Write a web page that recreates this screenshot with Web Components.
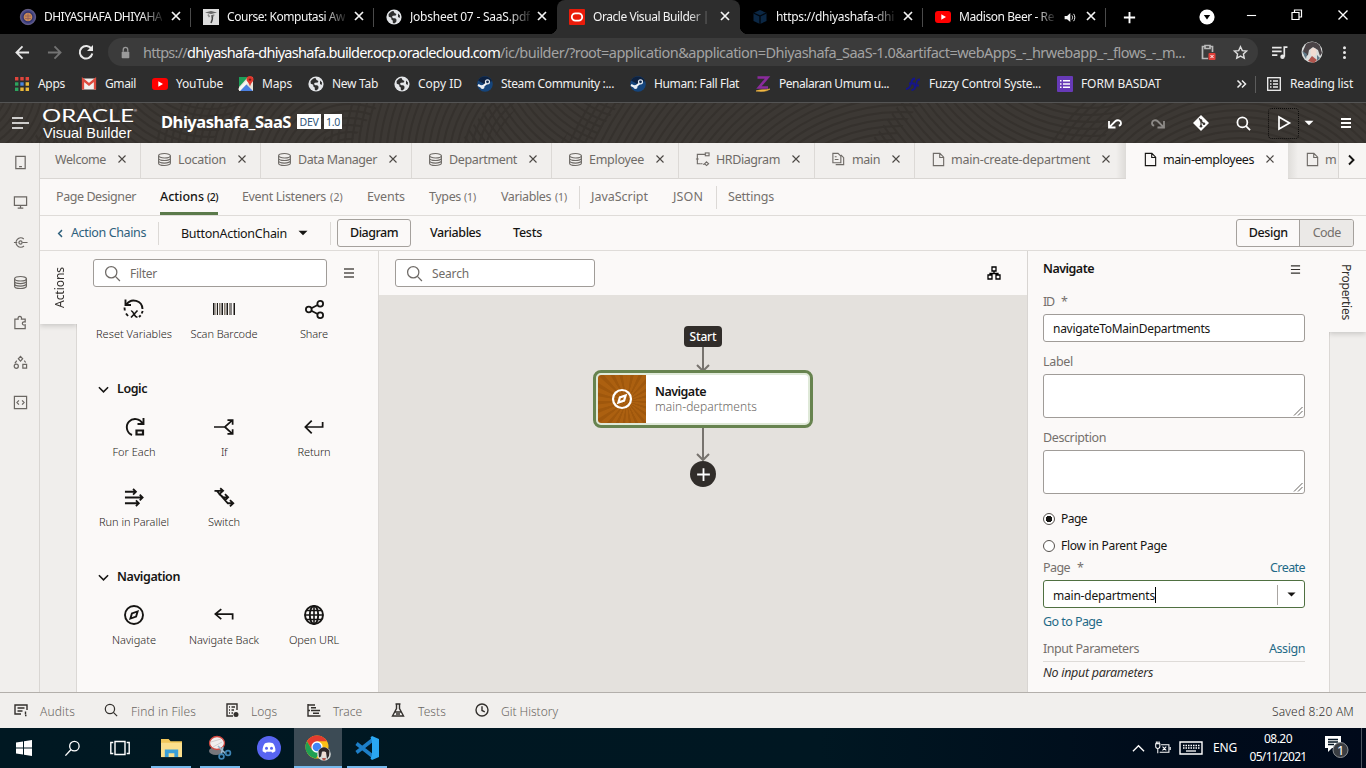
<!DOCTYPE html>
<html lang="en">
<head>
<meta charset="utf-8">
<title>Oracle Visual Builder</title>
<style>
html,body{margin:0;height:768px;overflow:hidden;background:#fbf9f8}
body{font-family:"Noto Sans","Open Sans",sans-serif;font-size:12px}
</style>
</head>
<body>
<desktop-screen></desktop-screen>
<script>
const define=(tag,css,html,ready)=>customElements.define(tag,class extends HTMLElement{
  connectedCallback(){
    if(this.shadowRoot)return;
    const root=this.attachShadow({mode:'open'});
    const t=document.createElement('template');
    t.innerHTML=`<style>:host{display:block;box-sizing:border-box}*{box-sizing:border-box}${css}</style>`+(typeof html==='function'?html(this):html);
    root.append(t.content.cloneNode(true));
    if(ready)ready(this,root);
  }
});

/* Single line of text whose letter spacing is tuned to fill the width in "w". */
define('ui-text',`:host{display:inline-block;white-space:pre;line-height:16px;flex:none;height:16px}
:host([fade]){-webkit-mask-image:linear-gradient(90deg,#000 82%,rgba(0,0,0,.15) 100%)}
span{display:inline-block;white-space:pre}`,'<span><slot></slot></span>',(el,root)=>{
  const w=+el.getAttribute('w');if(!w)return;
  const s=root.querySelector('span'),n=el.textContent.length;
  const size=el.getAttribute('size');if(size)el.style.fontSize=size+'px';
  el.style.width=w+'px';
  s.style.letterSpacing=((w-s.getBoundingClientRect().width)/n)+'px';
});
const T=(t,w,size,css='',attr='')=>`<ui-text w="${w}"${size?` size="${size}"`:''} style="${css}" ${attr}>${t}</ui-text>`;

const globe='<circle cx="8" cy="8" r="7.6" fill="#e3e5e8" stroke="none"/><path fill="#2d2d2d" stroke="none" d="M2.5 5.5c1-2 2.6-3.4 5-3.6L8.5 4 10.400 5l-.6 1.500-3 .3-.9 1.200 1.400 1.300h2l1.300 1.400-.4 2.200-2 1.500-1.300-.4-.2-2.500-1.500-1.300.2-1.400-2.600-1zM12 4.500l2 2-.3 2.500-1.700-1z"/>';
const db='<ellipse cx="8" cy="4" rx="6.300" ry="2.400"/><path d="M1.700 4v8c0 1.300 2.800 2.400 6.300 2.400s6.300-1.100 6.300-2.400V4M1.700 6.700C1.700 8 4.500 9.100 8 9.100s6.300-1.100 6.300-2.400M1.700 9.400c0 1.300 2.800 2.400 6.300 2.400s6.300-1.100 6.300-2.400"/>';
const steam='<circle cx="8" cy="8" r="7.800" fill="#15457c" stroke="none"/><path d="M1 4.500A8 8 0 0 1 15 5L9 9z" fill="#0d2140" stroke="none"/><path d="M1 9l4 2 5-4" stroke="#f2f4f6" stroke-width="2.200"/><circle cx="10.500" cy="5.800" r="2.600" fill="#dfe6ee" stroke="none"/><circle cx="10.500" cy="5.800" r="1.400" fill="#0f2a4f" stroke="none"/><circle cx="5.500" cy="11" r="2" fill="#e8edf3" stroke="none"/>';
const compass='<circle cx="10" cy="10" r="9"/><path d="M13.600 6.400l-1.500 5.200-5.700 2 1.500-5.200z"/>';
const ICONS={
crest:[16,'<circle cx="8" cy="8" r="7.700" fill="#4b4a86" stroke="#8b82a8" stroke-width=".6"/><circle cx="8" cy="8" r="5" fill="#c98a55" stroke="#2f336e"/><path d="M5 7h6M5 9.500h6M8 4.500v7" stroke="#8e5a5c" stroke-width=".8"/>'],
moodle:[16,'<rect width="16" height="16" fill="#dcdcdc" stroke="none"/><path d="M2 3.500l6-1.500 6 1.500-6 1.500z" fill="#666" stroke="none"/><path d="M9 6c1 3 0 6-1 8" stroke="#444" stroke-width="1.500"/><path d="M5 5.500l1.500 2.500M11 5.500l-1 2" stroke="#888" stroke-width="1.500"/>'],
globe:[16,globe],
oracle:[16,'<rect width="16" height="16" rx="1" fill="#ea1b0a" stroke="none"/><rect x="2.800" y="4.400" width="10.400" height="7.200" rx="3.600" stroke="#fff" stroke-width="1.800"/>'],
cube:[16,'<path d="M8 1l6.500 3v8L8 15l-6.500-3V4z" fill="#0b2744" stroke="none"/><path d="M1.500 4L8 7l6.500-3M8 7v8" stroke="#01060c" stroke-width="1.300"/>'],
yt:[16,'<rect y="2" width="16" height="12" rx="3" fill="#f00" stroke="none"/><path d="M6.300 5.200v5.600L11 8z" fill="#fff" stroke="none"/>'],
x:[16,'<path d="M4 4l8 8M12 4l-8 8"/>'],
audio:[16,'<path d="M2 6h3l4-3.500v11L5 10H2z" fill="currentColor" stroke="none"/><path d="M11 5.500c1 1 1 4 0 5M13 3.500c2 2 2 7 0 9"/>'],
plus:[16,'<path d="M8 2v12M2 8h12"/>'],
dropc:[16,'<circle cx="8" cy="8" r="7.600" fill="#fff" stroke="none"/><path d="M4.800 6h6.400L8 10.400z" fill="#000" stroke="none"/>'],
min:[12,'<path d="M1 6h10"/>'],
restore:[12,'<path d="M1 3.500h7v7H1zM3.500 3.500V1h7v7H8"/>'],
back:[16,'<path d="M15 8H2M8 1.500L1.500 8 8 14.500"/>'],
fwd:[16,'<path d="M1 8h13M8 1.500L14.500 8 8 14.500"/>'],
reload:[16,'<path d="M13.500 5A6.300 6.300 0 1 0 14.300 9.500"/><path d="M15 1v6H9z" fill="currentColor" stroke="none"/>'],
lock:[16,'<rect x="3.300" y="7" width="9.400" height="8" rx="1" fill="currentColor" stroke="none"/><path d="M5.200 7V4.600a2.800 2.800 0 0 1 5.600 0V7" stroke-width="1.600"/>'],
clip:[16,'<path d="M5 2.500H2.500v12H8M10 2.500h2.500V8M5 1.500h5v3H5z" stroke-width="1.700"/><rect x="8.500" y="9" width="7" height="7" rx="1" fill="#e0403a" stroke="none"/><path d="M10.500 11l3 3M13.500 11l-3 3" stroke="#fff" stroke-width="1"/>'],
star:[16,'<path d="M8 1.800l1.900 4.200 4.600.5-3.400 3.100.9 4.500L8 11.800 4 14.100l.9-4.500L1.500 6.500 6.100 6z"/>'],
music:[16,'<path d="M1 3.500h9M1 7h9M1 10.500h5M15.500 3h-3v9" stroke-width="1.600"/><circle cx="10.800" cy="12" r="2.100" fill="currentColor" stroke="none"/>'],
avatar:[22,'<circle cx="11" cy="11" r="10.500" fill="#d9dcdb" stroke="none"/><path d="M5 3c4-3 11-3 14 2l2 7-2 3-2-6-5-3-4 3-1 5-3 2-2-6z" fill="#4a4346" stroke="none"/><ellipse cx="12.500" cy="11" rx="3" ry="4" fill="#f0dcd3" stroke="none"/><path d="M7 20l4-5 5 4-3 3z" fill="#b0554d" stroke="none"/><path d="M1 10l5 3-1 5zM16 14l3 3-3 3z" fill="#5f7a89" stroke="none"/>'],
dots:[16,'<g fill="currentColor" stroke="none"><circle cx="8" cy="2.800" r="1.600"/><circle cx="8" cy="8" r="1.600"/><circle cx="8" cy="13.200" r="1.600"/></g>'],
apps:[14,'<g stroke="none"><path fill="#e0453c" d="M0 0h3.400v3.400H0zM5.300 0h3.400v3.400H5.300zM10.600 0H14v3.400h-3.400z"/><path fill="#2da45e" d="M0 5.300h3.400v3.400H0z"/><path fill="#4a86e0" d="M5.300 5.300h3.400v3.400H5.300z"/><path fill="#eab83a" d="M10.600 5.300H14v3.400h-3.400zM5.300 10.600h3.400V14H5.300zM10.600 10.600H14V14h-3.400z"/><path fill="#2da45e" d="M0 10.600h3.400V14H0z"/></g>'],
gmail:[16,'<path d="M1 2.500h14v11H1z" fill="#f2f0ee" stroke="none"/><path d="M2 13.500v-10l6 5 6-5v10" stroke="#dd4b3e" stroke-width="2.300"/>'],
maps:[16,'<path d="M1 1h14v14H1z" fill="#e9e4d8" stroke="none"/><path d="M1 1h9L1 11z" fill="#1e9d58" stroke="none"/><path d="M8 8l7 7H2z" fill="#4a7fe0" stroke="none"/><path d="M1 14L13 2" stroke="#f8f6f0" stroke-width="2.500"/><path d="M12 0a3.500 3.500 0 0 1 3.500 3.500c0 2-2.500 3-3.500 7-1-4-3.500-5-3.500-7A3.500 3.500 0 0 1 12 0z" fill="#e0382d" stroke="none"/><circle cx="12" cy="3.600" r="1.200" fill="#7d1a15" stroke="none"/>'],
steam:[16,steam],
zen:[16,'<path d="M2.500 1.500h10L4 11.500h9" stroke="#8a2b9c" stroke-width="2.600"/><path d="M1 15c5-2 9-.5 14-2-4 3-9 2.500-14 2z" fill="#f4b942" stroke="#f4b942" stroke-width=".6"/>'],
fuzzy:[16,'<path d="M10 2.500C6.500 2.500 7 5 6 8s-2 5-5 5M4 7.500h6M15 3.500c-4 0-3 2.500-4 5.500s-1.500 5-4.500 5M8.500 9.500H14" stroke="#15158a" stroke-width="1.800"/>'],
form:[16,'<rect width="16" height="16" rx="1" fill="#673ab7" stroke="none"/><path d="M6 4.800h7M6 8h7M6 11.200h7M3 4.800h1.500M3 8h1.500M3 11.200h1.500" stroke="#fff" stroke-width="1.500"/>'],
read:[14,'<rect x=".7" y=".7" width="12.600" height="12.600"/><path d="M6 4h5M6 7h5M6 10h5M3 4h1.500M3 7h1.500M3 10h1.500"/>'],
raquo:[12,'<path d="M1.500 2.500L5 6 1.500 9.500M6 2.500L9.500 6 6 9.500"/>'],
burger:[18,'<path d="M1 4h11M1 9h17M1 14h11"/>'],
menu:[12,'<path d="M1 2h10M1 6h10M1 10h10"/>'],
undo:[16,'<path d="M2 6v6.500h6.500M2.200 12.300L8 6.500c2.500-2.300 6-1 6 1.500 0 1.600-1 2.500-2.200 2.700"/>'],
redo:[16,'<path d="M14 6v6.500H7.500M13.800 12.300L8 6.500C5.500 4.200 2 5.500 2 8c0 1.600 1 2.500 2.200 2.700"/>'],
git:[16,'<path d="M8 0l8 8-8 8-8-8z" fill="#fff" stroke="none"/><path d="M6 3.500l2 1.800v6M8 6l3 3" stroke="#3a3632" stroke-width="1.200"/><g fill="#3a3632" stroke="none"><circle cx="8" cy="5.500" r="1.300"/><circle cx="8" cy="11.300" r="1.300"/><circle cx="11" cy="8.700" r="1.300"/></g>'],
mag:[16,'<circle cx="6.800" cy="6.800" r="5.300"/><path d="M10.700 10.700L15 15"/>'],
play:[16,'<path d="M3 2v12l10.500-6z"/>'],
caret:[10,'<path d="M.5 2.800h9L5 7.300z" fill="currentColor" stroke="none"/>'],
phone:[16,'<path d="M3 1.500h10v13H3zM6.500 12.300h3"/>'],
desk:[16,'<path d="M1.500 2h13v9h-13zM8 11v3M5 14h6"/>'],
svc:[16,'<path d="M11.500 4.200a5 5 0 1 0 .2 7.500M1 8h3.500M10 8h5.500"/><circle cx="8" cy="8" r="1.700"/>'],
db:[16,db],
puzzle:[16,'<path d="M2 4.500h3.500C5 2.500 6 1.500 7.300 1.500S9.500 2.500 9 4.500h4v3c-2-.5-3 .3-3 1.500s1 2 3 1.500v4H2z"/>'],
shapes:[16,'<path d="M8 1.500L10.300 4 8 6.500 5.700 4zM10.500 10h4v4h-4zM4 6L2 9M12 6l1.500 2"/><circle cx="3.500" cy="12" r="2.200"/>'],
code:[16,'<path d="M1.500 1.500h13v13h-13zM6.300 5.800L4.200 8l2.100 2.200M9.700 5.800L11.800 8l-2.100 2.200"/>'],
erd:[16,'<path d="M5 2.500H2.500v10H6M1 7.500h3M5 2.500h6M8.500 13h2"/><rect x="11" y="1" width="4" height="3"/><path d="M12.300 10.500l2.200 2-2.200 2-2-2zM8 12.500H6"/>'],
pages:[16,'<path d="M2 1.500h5.500L10.500 4.500v7H2zM5 13.500h8.500V6l-3-3M4 5h2M4 8h4"/>'],
page:[16,'<path d="M2.500 1.500h7l4 4v9h-11zM9.300 1.800v4h4"/>'],
right:[12,'<path d="M4 1.500L8.500 6 4 10.500"/>'],
left:[12,'<path d="M8 1.500L3.500 6 8 10.500"/>'],
down:[12,'<path d="M1 3.500L6 8.500l5-5"/>'],
org:[14,'<path d="M5 1h4v4H5zM1 9h4v4H1zM9 9h4v4H9zM7 5v2.500M3 9V7.500h8V9"/>'],
reset:[22,'<path d="M3.500 6.500A8.700 8.700 0 0 1 19.500 11M2.500 1.500v5.500H8"/><path d="M1.500 9.500l.3 3M3 15.500l2 2.500M19.700 13l-1 2.500M17.700 17.300L16 19" stroke-width="1.900"/><path d="M8 13c2.500-1 3 6.500 6.500 6M14.500 12.500L8 19.500" stroke-width="1.600"/>'],
barcode:[22,'<g stroke="none"><path fill="#1b1916" d="M0 5h1.500v12H0zM4 5h1v12H4zM8.500 5H10v12H8.500zM13.500 5H15v12h-1.500zM17.500 5h1v12h-1zM20.500 5H22v12h-1.500z"/><path fill="#8a8175" d="M2.300 5h1v12h-1zM6 5h1.600v12H6zM11 5h1.600v12H11zM16 5h.9v12H16z"/></g>'],
share:[22,'<circle cx="5" cy="11" r="3"/><circle cx="17" cy="5" r="3"/><circle cx="17" cy="17" r="3"/><path d="M7.700 9.700l6.600-3.400M7.700 12.300l6.600 3.400"/>'],
each:[22,'<path d="M9 19A8.300 8.300 0 1 1 19.500 7.500M20.500 2v6h-6"/><path d="M13.500 14.500h6.500v4h-6.500z" stroke-width="2.200"/>'],
iff:[22,'<path d="M0 11h12l8-7.300M12 11l8 7.300M14.800 3.500h5.700v5M14.800 18.500h5.700v-5"/>'],
ret:[22,'<path d="M2 11h18.500V5.500M8.500 4L1.500 11l7 7"/>'],
para:[22,'<path d="M1 5h11M1 11h18M1 17h14M9.500 2l3 3-3 3M16.500 8l3 3-3 3M12.500 14l3 3-3 3"/>'],
sw:[22,'<path d="M0.500 4h8.500M3 4l11.500 13h5.500M5 7l5 4h5M6.500 1.300L9.500 4l-3 2.700M11.500 7.500l3.300 3.200-3 3M16.700 13.700l3.500 3.300-3.500 3.300"/>'],
nav:[20,compass],
navback:[22,'<path d="M2 10h18.500v6M8 4.500L1.500 10 8 15.500"/>'],
url:[20,'<circle cx="10" cy="10" r="9"/><ellipse cx="10" cy="10" rx="4.200" ry="9"/><path d="M10 1v18M1 10h18M2.500 5.500h15M2.500 14.500h15" stroke-width="1.600"/>'],
audits:[14,'<path d="M13 7V2H1v9h6M3.500 5h7M3.500 8h5M11.500 8.500v3"/><path d="M11 12.500h1.500" stroke-width="1.600"/>'],
logs:[14,'<path d="M12 7V1H2v12h6M4 4h1M6.500 4H10M4 7h1M6.500 7H9M4 10h1M6.500 10H8"/><circle cx="11" cy="11.500" r="1.800" fill="currentColor"/>'],
trace:[14,'<path d="M1 1v12h12.500M1 2h7M4 4.700h5M4 7.500h9M6 10.300h6M1 7.500h2"/>'],
flask:[14,'<path d="M4.500 1h5M5.500 1v4.500L1.500 13h11L8.500 5.500V1M4 9h6M5 11h4"/>'],
clock:[14,'<circle cx="7" cy="7" r="6"/><path d="M7 3.200V7.500l2.800 1.300"/>'],
grip:[10,'<path d="M1 9.500L9.500 1M5 9.500L9.500 5" stroke-width=".9"/>'],
win:[18,'<path d="M1 3.500l7-1v6H1zM9 2.300L17 1v7.500H9zM1 9.500h7v6l-7-1zM9 9.500h8V17l-8-1.200z" fill="#fff" stroke="none"/>'],
wmag:[18,'<circle cx="11" cy="6.500" r="5"/><path d="M7.500 10L1.500 16.500"/>'],
task:[20,'<path d="M5 3.500h10v13H5zM3.300 4.500H.8v11h2.500M16.700 4.500h2.500v11h-2.500"/>'],
folder:[22,'<path d="M0 1h8l2 2.500h12V20H0z" fill="#f2c75a" stroke="none"/><path d="M0 5h22v15H0z" fill="#fbdf8d" stroke="none"/><path d="M4 20v-8h14v8h-4v-4H8v4z" fill="#3a9fd8" stroke="none"/>'],
snip:[24,'<ellipse cx="8" cy="15" rx="7" ry="4" fill="#77777c" stroke="none"/><ellipse cx="9" cy="7" rx="7.500" ry="6.500" fill="#f1eeee" stroke="#d0473f" stroke-width="1.300"/><path d="M3 6l10-3M5 11l9-5" stroke="#c8c4c4" stroke-width=".8"/><path d="M10 10l8 8M15 11l-2 8" stroke="#9ab8cd" stroke-width="1.600"/><circle cx="13.500" cy="20.500" r="2.400" stroke="#3f85b5" stroke-width="1.700"/><circle cx="20" cy="17" r="2.400" stroke="#3f85b5" stroke-width="1.700"/>'],
discord:[24,'<circle cx="12" cy="12" r="12" fill="#5865f2" stroke="none"/><path d="M8 7.200c2.500-1 5.500-1 8 0 1.800 2.400 2.600 5 2.400 8-1 .9-2.200 1.400-3.300 1.600l-.8-1.400c-1.500.4-3.100.4-4.600 0l-.8 1.400c-1.100-.2-2.300-.7-3.300-1.600-.2-3 .6-5.600 2.400-8z" fill="#fff" stroke="none"/><circle cx="9.500" cy="12.300" r="1.500" fill="#5865f2" stroke="none"/><circle cx="14.500" cy="12.300" r="1.500" fill="#5865f2" stroke="none"/>'],
chrome:[28,'<circle cx="13" cy="13" r="11.500" fill="#fbc016" stroke="none"/><path d="M3 7.300A11.500 11.500 0 0 1 23 7.300H13L8 16z" fill="#e33b2e" stroke="none"/><path d="M3 7.300A11.500 11.500 0 0 0 12 24.500L17 16H8z" fill="#20a052" stroke="none"/><circle cx="13" cy="13" r="5" fill="#4285f4" stroke="#fff" stroke-width="1.300"/><circle cx="20" cy="20" r="6.800" fill="#d5d8d7" stroke="none"/><path d="M14.500 17c3-5 8-5 11 0l-.5 5-2 3-1-7-4-.5-1 5-2 1z" fill="#30272a" stroke="none"/><ellipse cx="20" cy="20.500" rx="2" ry="3" fill="#f0dcd3" stroke="none"/><path d="M18 24l4 0-1 2.500h-2z" fill="#b0554d" stroke="none"/>'],
vscode:[24,'<path d="M1.500 16.500L18 3.500M1.500 7.500L18 20.500" stroke="#1d7fc8" stroke-width="3.600"/><path d="M17 0l7 3v18l-7 3-1.500-1.500L17 19V5l-1.500-3.500z" fill="#2aa7f2" stroke="none"/>'],
up:[14,'<path d="M1 10l6-6 6 6"/>'],
batt:[18,'<path d="M4 4V1.500M1.800 4h4.400v3c0 1-1 2-2.200 2S1.800 8 1.800 7zM4 9v5M7.500 5h8.300v8H6M17.200 7.500v3M2.500 1.500V4M5.500 1.500V4M9 7l4 4M13 7l-4 4" stroke-width="1.100"/>'],
kbd:[24,'<path d="M1 6h22v12H1z" stroke-width="1.400"/><path d="M4 9.500h17M4 12h17" stroke-dasharray="1.500 1"/><path d="M7 15h10"/>'],
notif:[24,'<path d="M0 2h16v12H7l-4 4v-4H0z" fill="#fff" stroke="none"/><path d="M3 5.500h10M3 8h10M3 10.500h6" stroke="#00101e"/><circle cx="15.500" cy="16" r="7.500" fill="#3a3d42" stroke="#8b8f94" stroke-width="1"/>']
};
define('ui-icon',':host{display:inline-flex;flex:none;line-height:0}svg{display:block;overflow:visible;fill:none;stroke:currentColor}',el=>{
  const [v,p]=ICONS[el.getAttribute('name')],s=el.getAttribute('size')||v;
  return `<svg width="${s}" height="${s}" viewBox="0 0 ${v} ${v}" stroke-width="${el.getAttribute('sw')||1.3}">${p}</svg>`;
});
const I=(n,s='',sw='',css='')=>`<ui-icon name="${n}" ${s?`size="${s}"`:''} ${sw?`sw="${sw}"`:''} style="${css}"></ui-icon>`;
/* Text or icon centred in a fixed-width cell. */
define('ui-cell',':host{display:flex;align-items:center;justify-content:center;flex:none;width:var(--w)}','<slot></slot>');
const C=(w,inner,css='')=>`<ui-cell style="--w:${w}px;${css}">${inner}</ui-cell>`;
const G=w=>`<ui-cell style="--w:${w}px"></ui-cell>`;

/* ---------- browser ---------- */
define('browser-tab',`:host{display:flex;align-items:center;width:183px;height:34px;padding-left:12px;position:relative;color:#f4f4f4;flex:none}
:host([active]){background:#2d2d2d;border-radius:8px 8px 0 0}
:host([active])::before,:host([active])::after{content:"";position:absolute;bottom:0;width:8px;height:8px}
:host([active])::before{left:-8px;background:radial-gradient(circle at 0 0,transparent 8px,#2d2d2d 8.500px)}
:host([active])::after{right:-8px;background:radial-gradient(circle at 100% 0,transparent 8px,#2d2d2d 8.500px)}
:host([line]){background:linear-gradient(#4a4a4a,#4a4a4a) right 0 top 8px/1px 19px no-repeat}
.t{width:120px;margin-left:8px;display:flex;overflow:hidden}.x{margin-left:4px;padding-top:1px}`,
el=>`${I(el.getAttribute('icon'))}<span class="t">${T(el.getAttribute('label'),+el.getAttribute('w'),12,'','fade')}${el.hasAttribute('audio')?C(14,I('audio',13,'1.200'),'margin-left:8px;height:16px'):''}</span><span class="x">${I('x',16,'1.700')}</span>`);
define('browser-tabs',':host{display:flex;background:#000;height:34px;padding-left:8px;color:#fff;align-items:center}',
`<browser-tab line icon="crest" w="118" label="DHIYASHAFA DHIYAHA"></browser-tab>
<browser-tab line icon="moodle" w="118" label="Course: Komputasi Aw"></browser-tab>
<browser-tab icon="globe" w="120" label="Jobsheet 07 - SaaS.pdf"></browser-tab>
<browser-tab active icon="oracle" w="116" label="Oracle Visual Builder |"></browser-tab>
<browser-tab line icon="cube" w="118" label="https://dhiyashafa-dhi"></browser-tab>
<browser-tab line icon="yt" w="95" label="Madison Beer - Re" audio></browser-tab>`
+C(46,I('plus',15,'2'))+G(39)+C(32,I('dropc',16))+G(5)+C(46,I('min',11,'1.200'),'padding-bottom:4px')+C(46,I('restore',12,'1.200'),'padding-bottom:5px')+C(46,I('x',18,'1.200'),'padding-bottom:5px'));
define('browser-toolbar',`:host{display:flex;height:36px;align-items:center;background:#2d2d2d;color:#e8e8e8;padding-left:6px}
.omni{display:flex;align-items:center;width:1150px;height:28px;border-radius:14px;background:#3b3b3b;margin-left:6px;font-size:14.500px;color:#a3a3a3;flex:none}`,
C(32,I('back',15,'1.900'))+C(32,I('fwd',15,'1.900'),'color:#737373')+C(32,I('reload',16,'2'))+
`<div class="omni">${C(35,I('lock',13),'color:#9a9a9a')}${T('https://',44)}${T('dhiyashafa-dhiyashafa.builder.ocp.oraclecloud.com',313,0,'color:#fff')}${T('/ic/builder/?root=application&amp;application=Dhiyashafa_SaaS-1.0&amp;artifact=webApps_-_hrwebapp_-_flows_-_m...',685)}${G(7)}${C(32,I('clip',16),'color:#b9b9b9')}${C(32,I('star',15,'1.500'),'color:#ddd')}</div>`
+G(5)+C(32,I('music',17))+G(1)+C(32,I('avatar'))+C(32,I('dots',15)));
define('bookmark-item',':host{display:flex;align-items:center;color:#f1f1f1;margin-right:var(--g)}',
el=>C(16,I(el.getAttribute('icon'),el.getAttribute('icon')=='apps'||el.getAttribute('icon')=='read'?14:16))+G(8)+T(el.getAttribute('label'),+el.getAttribute('w'),12));
const bm=(i,l,w,g)=>`<bookmark-item icon="${i}" label="${l}" w="${w}" style="--g:${g}px"></bookmark-item>`;
define('bookmark-bar',':host{display:flex;height:33px;background:#2d2d2d;border-bottom:1px solid #545454;padding:0 0 4px 14px;align-items:center;color:#eee}',
bm('apps','Apps',27,16)+bm('gmail','Gmail',31,16)+bm('yt','YouTube',47,15)+bm('maps','Maps',30,16)+bm('globe','New Tab',46,16)+bm('globe','Copy ID',44,15)+bm('steam','Steam Community :...',113,16)+bm('steam','Human: Fall Flat',85,16)+bm('zen','Penalaran Umum u...',110,16)+bm('fuzzy','Fuzzy Control Syste...',112,16)+bm('form','FORM BASDAT',80,75)
+C(11,I('raquo',12,'1.500'))+G(8)+C(1,'','height:17px;background:#5c5c5c')+G(10)+bm('read','Reading list',63,0));

/* ---------- Visual Builder header ---------- */
define('header-pattern',':host{position:absolute;inset:0;overflow:hidden}svg{display:block}',()=>{
  let s='';
  [[-40,-20,0,130],[210,-70,60,240],[350,70,180,380],[640,-80,490,620],[560,60,350,520],[900,190,590,920],[1090,-120,900,1130],[1240,160,1080,1396]].forEach(([cx,cy,a,b],k)=>{
    s+=`<clipPath id="p${k}"><path d="M${a} 0H${b}L${b-30} 40H${a-30}z"/></clipPath><g clip-path="url(#p${k})">`;
    for(let r=20;r<420;r+=7)s+=`<circle cx="${cx}" cy="${cy}" r="${r}"/>`;
    s+='</g>';
  });
  return `<svg width="1366" height="40" fill="none" stroke="#35312d" stroke-width="2">${s}</svg>`;
});
define('vb-header',`:host{display:flex;align-items:center;position:relative;height:40px;background:#3c3834;color:#fff;padding-left:11px}
.row{display:flex;align-items:center;position:relative;width:100%;height:40px}
.brand{width:92px;height:34px;margin-left:14px;flex:none}
.brand svg{display:block;overflow:visible}
.name{margin-left:26px}
.badge{background:#fff;color:#31577a;height:15px;display:flex;align-items:center;justify-content:center;flex:none;margin-bottom:3px}
.run{width:31px;height:31px;border:1px dotted #0c0b0a;border-radius:4px;display:flex;align-items:center;justify-content:center;flex:none}`,
`<header-pattern></header-pattern><div class="row">${I('burger',18,'1.600')}
<div class="brand"><svg width="92" height="34" fill="#fff"><text x="-1" y="15.500" textLength="92" lengthAdjust="spacingAndGlyphs" font-family="Lato" font-size="17.500">ORACLE</text><text x="91" y="6" font-size="4" font-family="Liberation Sans">®</text><text x="0" y="32" textLength="88.500" lengthAdjust="spacingAndGlyphs" font-family="Liberation Sans" font-size="14.500">Visual Builder</text></svg></div>
<div class="name">${T('Dhiyashafa_SaaS',130,16.5,'font-weight:700')}</div>${G(6)}
<div class="badge" style="width:24px">${T('DEV',19,10.5)}</div>${G(3)}<div class="badge" style="width:18px">${T('1.0',14,10.5)}</div>
${G(751)}${C(43,I('undo',16,'1.800'))}${C(43,I('redo',16,'1.800'),'color:#8d8a87')}${C(43,I('git',16))}${C(43,I('mag',15,'1.900'))}${G(3)}<div class="run">${I('play',16,'1.700')}</div>${C(20,I('caret',10))}${G(19)}${C(16,I('menu',12,'1.800'))}</div>`);

/* ---------- workspace ---------- */
define('side-rail',':host{display:flex;flex-direction:column;width:40px;background:#f1efed;border-right:1px solid #d9d6d3;color:#6b6763;flex:none}.i{height:40px;display:flex;align-items:center;justify-content:center;padding:0 0 1px 1px}',
['phone','desk','svc','db','puzzle','shapes','code'].map(n=>`<div class="i">${I(n,15,'1.300')}</div>`).join(''));
define('editor-tab',`:host{display:flex;align-items:center;width:var(--w);height:36px;flex:none;border-left:1px solid #dcd9d6;border-bottom:1px solid #d9d6d3;color:#6f6b67;background:#f1efed;overflow:hidden;padding:0 0 1px 16px}
:host([first]){border-left:0;padding-left:15px}
:host([active]){background:#fbf9f8;border-color:#fbf9f8;color:#161513;padding-left:17px;border-left:0}
:host([before]){background:linear-gradient(90deg,#f1efed 150px,#f1efed calc(100% - 10px),#dddbd8)}
:host([after]){background:linear-gradient(90deg,#dfddda,#f1efed 10px);border-left:0;padding-left:17px}
.x{color:#4c4845;margin-left:9px;padding-top:2px}.ic{display:flex;padding-bottom:1px}`,
el=>(el.getAttribute('icon')?`<span class="ic">${C(14,I(el.getAttribute('icon'),15,'1.200'))}</span>`+G(el.getAttribute('icon')=='page'?6:7):'')+T(el.getAttribute('label'),+el.getAttribute('t'),12.5)+(el.hasAttribute('after')?'':`<span class="x">${I('x',14,'1.300')}</span>`));
const et=(i,l,t,w,a='')=>`<editor-tab ${a} icon="${i}" label="${l}" t="${t}" style="--w:${w}px"></editor-tab>`;
define('editor-tabs',':host{display:flex;height:36px;background:#f1efed;overflow:hidden}.more{width:28px;border-left:1px solid #d9d6d3;border-bottom:1px solid #d9d6d3;background:#f7f5f3;display:flex;align-items:center;justify-content:center;flex:none;color:#161513;padding:0 3px 2px 0}',
et('','Welcome',51,100,'first')+et('db','Location',48,120)+et('db','Data Manager',79,151)+et('db','Department',68,140)+et('db','Employee',55,127)+et('erd','HRDiagram',64,136)+et('pages','main',28,100)+et('page','main-create-department',139,212,'before')+et('page','main-employees',91,162,'active')+et('page','m',10,50,'after')+`<div class="more">${I('right',12,'1.900')}</div>`);
define('sub-tabs',`:host{display:flex;height:37px;align-items:center;border-bottom:1px solid #dfdcd9;color:#75706c;font-size:12.500px;padding-left:16px}
.a{height:36px;display:flex;align-items:center;color:#161513;border-bottom:3px solid #5b7a4b;padding-top:3px;font-weight:500}
.s{width:1px;height:23px;background:#dcd9d6}`,
T('Page Designer',80)+G(24)+`<div class="a">${T('Actions',44)+G(3)+T('(2)',11,10.5)}</div>`+G(24)+T('Event Listeners',84)+G(4)+T('(2)',13,10.5)+G(24)+T('Events',38)+G(24)+T('Types',32)+G(3)+T('(1)',12,10.5)+G(25)+T('Variables',50)+G(4)+T('(1)',12,10.5)+G(12)+'<i class="s"></i>'+G(11)+T('JavaScript',57)+G(25)+T('JSON',30)+G(13)+'<i class="s"></i>'+G(11)+T('Settings',46));
define('chain-bar',`:host{display:flex;height:35px;align-items:center;border-bottom:1px solid #dfdcd9;color:#161513;font-size:12.500px;padding-left:14px}
.s{width:1px;height:23px;background:#dcd9d6}
.b{height:28px;border:1px solid #a5a19d;border-radius:3px;display:flex;align-items:center;justify-content:center;width:74px;margin-left:6px}
.sw{display:flex;width:118px;height:28px;border:1px solid #a5a19d;border-radius:3px;overflow:hidden;margin-left:auto;margin-right:12px}
.sw div{display:flex;align-items:center;justify-content:center;width:63px}.sw div+div{background:#ebe9e7;border-left:1px solid #a5a19d;width:54px;color:#75706c}`,
C(12,I('left',9,'1.900'),'color:#2e607c')+G(5)+T('Action Chains',75,0,'color:#2e607c')+G(12)+'<i class="s"></i>'+G(22)+T('ButtonActionChain',106,0,'position:relative;top:1px')+G(11)+I('caret',10)+G(22)+'<i class="s"></i>'+`<div class="b">${T('Diagram',48,0,'font-weight:500')}</div>`+G(19)+T('Variables',51,0,'font-weight:500')+G(32)+T('Tests',29,0,'font-weight:500')+`<div class="sw"><div>${T('Design',39,0,'font-weight:500')}</div><div>${T('Code',28)}</div></div>`);

define('search-field',':host{display:flex;align-items:center;width:var(--w);height:28px;border:1px solid #a09c98;border-radius:3px;background:#fff;color:#6f6b67;font-size:12.500px;flex:none;padding-left:10px}',
el=>I('mag',17,'1.200')+G(9)+T(el.getAttribute('label'),+el.getAttribute('t'),12,'position:relative;top:1px'));
define('dock-tab',`:host{display:flex;flex-direction:column;width:37px;background:#f0eeec;flex:none}
.tab{height:var(--h);background:#fbf9f8;box-shadow:0 2px 5px rgba(0,0,0,.16);clip-path:inset(0 0 -8px 0);display:flex;justify-content:center;align-items:center;color:#33302d;padding:0 3px 0 0}
:host([up]) .tab{padding:0 0 0 2px}
.tab span{writing-mode:vertical-rl;display:block;line-height:16px;white-space:nowrap;height:var(--len)}
:host([up]) .tab span{transform:rotate(180deg)}
.rest{flex:1;border:0 solid #dbd8d5}
:host([up]) .rest{border-right-width:1px}:host(:not([up])) .rest{border-left-width:1px}`,
'<div class="tab"><span><slot></slot></span></div><div class="rest"></div>',(el,root)=>{
  const s=root.querySelector('span'),want=+el.getAttribute('len');
  s.style.fontSize='12px';s.style.height='auto';
  s.style.letterSpacing=(want-s.getBoundingClientRect().height)/el.textContent.length+'px';
});
define('palette-item',':host{display:flex;flex-direction:column;align-items:center;width:90px;height:70px;color:#161513;flex:none}.i{height:34px;display:flex;align-items:center}',
el=>`<div class="i">${I(el.getAttribute('icon'),el.getAttribute('size')||22,'1.900')}</div>${T(el.getAttribute('label'),+el.getAttribute('w'),11,'color:#262320;font-weight:300')}`);
const pi=(i,l,w,s='')=>`<palette-item icon="${i}" label="${l}" w="${w}" ${s?`size="${s}"`:''}></palette-item>`;
define('palette-section',`:host{display:block}.h{height:30px;display:flex;align-items:center;padding-left:20px;color:#161513;font-weight:600}.g{display:flex;flex-wrap:wrap;padding-left:12px;margin-top:6px}`,
el=>(el.getAttribute('label')?`<div class="h">${C(12,I('down',11,'1.700'))}${G(8)}${T(el.getAttribute('label'),+el.getAttribute('w'),12.5,'font-weight:600')}</div>`:'')+'<div class="g"><slot></slot></div>');
define('action-palette',`:host{display:flex;flex-direction:column;width:302px;border-right:1px solid #dcd9d6;flex:none;overflow:hidden}
.top{display:flex;align-items:center;height:44px;padding-left:16px;flex:none;color:#55514d}
.list{flex:1;overflow:hidden;display:flex;flex-direction:column}`,
`<div class="top"><search-field style="--w:234px" label="Filter" t="27"></search-field>${G(15)}${C(14,I('menu',12,'1.400'))}</div>
<div class="list"><palette-section style="margin-top:-9px">${pi('reset','Reset Variables',76)+pi('barcode','Scan Barcode',67)+pi('share','Share',28,21)}</palette-section>
<palette-section style="margin-top:12px" label="Logic" w="30">${pi('each','For Each',43)+pi('iff','If',6,20)+pi('ret','Return',33,20)+pi('para','Run in Parallel',70,21)+pi('sw','Switch',32,21)}</palette-section>
<palette-section style="margin-top:12px" label="Navigation" w="63">${pi('nav','Navigate',44,20)+pi('navback','Navigate Back',70,20)+pi('url','Open URL',50,20)}</palette-section></div>`);

define('flow-node',`:host{position:absolute;left:214px;top:75px;width:220px;height:58px;border:3px solid #67834f;border-radius:8px;background:#fff;display:flex;box-shadow:inset 0 0 0 2px #dfe9d8;padding:2px}
.art{width:48px;height:48px;border-radius:3px 0 0 3px;background:repeating-conic-gradient(from 0deg at 60% 55%,#ac6010 0 7deg,#9f570c 9deg 14deg,#ac6010 16deg);display:flex;align-items:center;justify-content:center;color:#fff}
.t{display:flex;flex-direction:column;padding:9px 0 0 9px}`,
`<div class="art">${I('nav',20,'2.200')}</div><div class="t">${T('Navigate',51,12.5,'font-weight:600;color:#161513;height:15px')}${T('main-departments',102,12,'color:#6b6763;font-weight:300')}</div>`);
define('flow-canvas',`:host{display:flex;flex-direction:column;width:649px;flex:none;border-right:1px solid #d8d5d2}
.top{display:flex;align-items:center;height:44px;padding-left:16px;flex:none}
.c{flex:1;position:relative;background:#e4e1dd}
.start{position:absolute;left:305px;top:31px;width:38px;height:21px;border-radius:4px;background:#312d2a;color:#fff;display:flex;align-items:center;justify-content:center;padding-top:1px}
.add{position:absolute;left:311px;top:166px;width:26px;height:26px;border-radius:13px;background:#312d2a;color:#fff;display:flex;align-items:center;justify-content:center}
.lines{position:absolute;left:314px;top:52px}`,
`<div class="top"><search-field style="--w:200px" label="Search" t="37"></search-field>${G(392)}${C(14,I('org',14,'1.300'))}</div>
<div class="c"><div class="start">${T('Start',27,12,'font-weight:500')}</div>
<svg class="lines" width="20" height="116" fill="none" stroke="#77736e" stroke-width="2"><path d="M10 0v24M4 18l6 6 6-6M10 81v32M4 107l6 6 6-6"/></svg>
<flow-node></flow-node><div class="add">${I('plus',17,'1.700')}</div></div>`);

define('ui-field',`:host{display:flex;align-items:center;width:262px;height:var(--h,28px);border:1px solid #a09c98;border-radius:3px;background:#fff;color:#161513;font-size:12px;padding:1px 0 0 9px;flex:none}
:host([focus]){border-color:#4f7041}
:host([area]){align-items:flex-end;justify-content:flex-end}`,el=>el.hasAttribute('area')?I('grip',10,'',`color:#55514d;margin:0 1px 1px 0`):'<slot></slot>');
define('ui-radio',':host{display:flex;align-items:center;height:16px;color:#161513}i{width:12px;height:12px;border:1px solid #55514d;border-radius:50%;margin-right:6px;background:#fff;flex:none}:host([on]) i{background:radial-gradient(circle,#161513 3px,#fff 3.500px)}','<i></i><slot></slot>');
define('props-panel',`:host{display:flex;flex-direction:column;width:301px;padding:10px 0 0 15px;flex:none;font-size:12.500px;color:#75706c}
.r{display:flex;align-items:center;width:262px;height:16px;flex:none}.e{margin-left:auto;display:flex}.l{color:#1f6a87}
hr{width:262px;height:1px;border:0;background:#dedbd8;margin:4px 0 0;flex:none}.cur{width:1px;height:16px;background:#000}`,
`<div class="r">${T('Navigate',51,12.5,'font-weight:600;color:#161513')}<span class="e" style="color:#33302d">${I('menu',11,'1.300','margin-right:4px')}</span></div>
<div class="r" style="margin-top:17px">${T('ID',11)}${G(7)}${T('*',5)}</div>
<ui-field style="margin-top:4px">${T('navigateToMainDepartments',157,12)}</ui-field>
<div class="r" style="margin-top:12px">${T('Label',30)}</div><ui-field area style="--h:44px;margin-top:4px"></ui-field>
<div class="r" style="margin-top:12px">${T('Description',63)}</div><ui-field area style="--h:44px;margin-top:4px"></ui-field>
<ui-radio on style="margin-top:17px">${T('Page',26,12)}</ui-radio><ui-radio style="margin-top:11px">${T('Flow in Parent Page',106,12)}</ui-radio>
<div class="r" style="margin-top:6px">${T('Page',27)}${G(7)}${T('*',5)}<span class="e l">${T('Create',35)}</span></div>
<ui-field focus style="margin-top:4px">${T('main-departments',102,12,'position:relative;top:1px')}<span class="cur"></span>${G(121)}<span style="width:1px;height:20px;background:#aaa6a2"></span>${G(9)}${I('caret',9)}</ui-field>
<div class="r l" style="margin-top:6px">${T('Go to Page',59)}</div>
<div class="r" style="margin-top:11px">${T('Input Parameters',96)}<span class="e l">${T('Assign',36)}</span></div><hr>
<div class="r" style="margin-top:3px;font-style:italic;color:#33302d">${T('No input parameters',110)}</div>`);
define('vb-workspace',`:host{display:flex;height:549px;background:#fbf9f8;flex:none}.m{display:flex;flex-direction:column;width:1326px}.b{display:flex;flex:1;min-height:0}`,
`<side-rail></side-rail><div class="m"><editor-tabs></editor-tabs><sub-tabs></sub-tabs><chain-bar></chain-bar><div class="b"><dock-tab up len="41" style="--h:73px">Actions</dock-tab><action-palette></action-palette><flow-canvas></flow-canvas><props-panel></props-panel><dock-tab len="56" style="--h:81px">Properties</dock-tab></div></div>`);

/* ---------- footers ---------- */
define('status-bar',':host{display:flex;height:36px;flex:none;background:#f1efed;border-top:1px solid #b3afab;align-items:center;color:#6b6763;font-size:12px;padding:2px 0 0 14px}.i{color:#33302d;display:flex;padding-bottom:3px}.s{margin-left:auto;margin-right:12px;color:#33302d;padding-bottom:1px}',
[['audits','Audits',35,12,29],['mag','Find in Files',65,13,29],['logs','Logs',26,12,30],['trace','Trace',29,12,29],['flask','Tests',28,13,29],['clock','Git History',57,12,0]].map(([i,l,w,g,n])=>`<span class="i">${I(i,14,'1.400')}</span>${G(g)}${T(l,w,0,'font-weight:300')}${G(n)}`).join('')+`<span class="s">${T('Saved 8:20 AM',82,0,'font-weight:300')}</span>`);
define('task-button',`:host{display:flex;align-items:center;justify-content:center;width:48px;height:40px;position:relative;flex:none}
:host([open])::after{content:"";position:absolute;left:var(--l,4px);right:var(--l,4px);bottom:0;height:2px;background:#76b9ed}
:host([active]){background:#3c4b55;--l:0px}`,'<slot></slot>');
define('win-taskbar',`:host{display:flex;height:40px;background:linear-gradient(90deg,#001822,#001722 60%,#000c1b 85%,#00091a);color:#fff;align-items:center;font-size:12px}
.clk{display:flex;flex-direction:column;align-items:center;gap:2px;width:58px}.n{position:relative}.n ui-text{position:absolute;left:12px;top:8px}.end{width:1px;height:40px;background:#4c5560;margin-left:12px}`,
`<task-button>${I('win',18)}</task-button><task-button>${I('wmag',17,'1.400')}</task-button><task-button>${I('task',20,'1.400')}</task-button>${G(3)}<task-button open>${I('folder',21)}</task-button>${G(1)}<task-button open>${I('snip',24)}</task-button>${G(1)}<task-button>${I('discord',24)}</task-button>${G(1)}<task-button active open>${I('chrome',28)}</task-button>${G(1)}<task-button open>${I('vscode',24)}</task-button>
<div style="display:flex;align-items:center;margin-left:auto">${I('up',13,'1.400')}${G(9)}${I('batt',17)}${G(8)}${I('kbd',24)}${G(10)}${T('ENG',24)}${G(12)}<div class="clk">${T('08.20',28)}${T('05/11/2021',57)}</div>${G(18)}<span class="n">${I('notif',24)}${T('1',8,13)}</span><span class="end"></span>${G(4)}</div>`);
define('desktop-screen',':host{display:flex;flex-direction:column;width:1366px;height:768px;overflow:hidden}',
'<browser-tabs></browser-tabs><browser-toolbar></browser-toolbar><bookmark-bar></bookmark-bar><vb-header></vb-header><vb-workspace></vb-workspace><status-bar></status-bar><win-taskbar></win-taskbar>');
</script>
</body>
</html>
